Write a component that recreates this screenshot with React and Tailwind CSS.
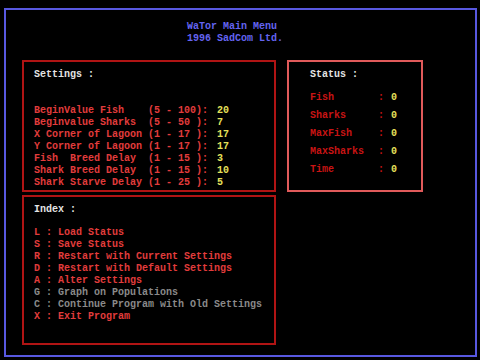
import React from "react";

const SETTINGS = [
  ["BeginValue Fish    (5 - 100):", "20"],
  ["Beginvalue Sharks  (5 - 50 ):", "7"],
  ["X Corner of Lagoon (1 - 17 ):", "17"],
  ["Y Corner of Lagoon (1 - 17 ):", "17"],
  ["Fish  Breed Delay  (1 - 15 ):", "3"],
  ["Shark Breed Delay  (1 - 15 ):", "10"],
  ["Shark Starve Delay (1 - 25 ):", "5"],
];

const STATUS = ["Fish", "Sharks", "MaxFish", "MaxSharks", "Time"];

const INDEX = [
  ["L", "Load Status", true],
  ["S", "Save Status", true],
  ["R", "Restart with Current Settings", true],
  ["D", "Restart with Default Settings", true],
  ["A", "Alter Settings", true],
  ["G", "Graph on Populations", false],
  ["C", "Continue Program with Old Settings", false],
  ["X", "Exit Program", true],
];

export default function App() {
  return (
    <div
      className="w-[480px] h-[360px] bg-black overflow-hidden pt-[8px] pl-[4px] text-[10px] leading-[12px] font-bold"
      style={{ fontFamily: "'Liberation Mono', 'DejaVu Sans Mono', monospace" }}
    >
      <div className="w-[473px] h-[349px] border-2 border-[#5858e0] pl-[16px] pt-[11px]">
        {/* Title */}
        <div className="pl-[165px] text-[#6464f0] whitespace-pre">
          <div>WaTor Main Menu</div>
          <div>1996 SadCom Ltd.</div>
        </div>

        <div className="flex mt-[15px]">
          <div className="flex flex-col gap-[3px] w-[254px]">
            {/* Settings */}
            <div className="h-[132px] border-2 border-[#b01414] pl-[10px] pt-[7px]">
              <div className="text-[#e4e4e4]">Settings :</div>
              <div className="mt-[24px]">
                {SETTINGS.map(([label, val]) => (
                  <div key={label} className="flex whitespace-pre">
                    <span className="w-[183px] text-[#e23c3c]">{label}</span>
                    <span className="text-[#e6e05a]">{val}</span>
                  </div>
                ))}
              </div>
            </div>

            {/* Index */}
            <div className="h-[150px] border-2 border-[#b01414] pl-[10px] pt-[7px]">
              <div className="text-[#e4e4e4]">Index :</div>
              <div className="mt-[11px]">
                {INDEX.map(([key, text, on]) => (
                  <div
                    key={key}
                    className={
                      on
                        ? "whitespace-pre text-[#e23c3c]"
                        : "whitespace-pre text-[#8a8a8a]"
                    }
                  >
                    {key} : {text}
                  </div>
                ))}
              </div>
            </div>
          </div>

          {/* Status */}
          <div className="ml-[11px] w-[136px] h-[132px] border-2 border-[#e05a5a] pl-[21px] pt-[7px]">
            <div className="text-[#e4e4e4]">Status :</div>
            <div className="mt-[8px]">
              {STATUS.map((s) => (
                <div key={s} className="flex leading-[18px]">
                  <span className="w-[68px] text-[#c81414]">{s}</span>
                  <span className="w-[13px] text-[#c81414]">:</span>
                  <span className="text-[#e6e05a]">0</span>
                </div>
              ))}
            </div>
          </div>
        </div>
      </div>
    </div>
  );
}
